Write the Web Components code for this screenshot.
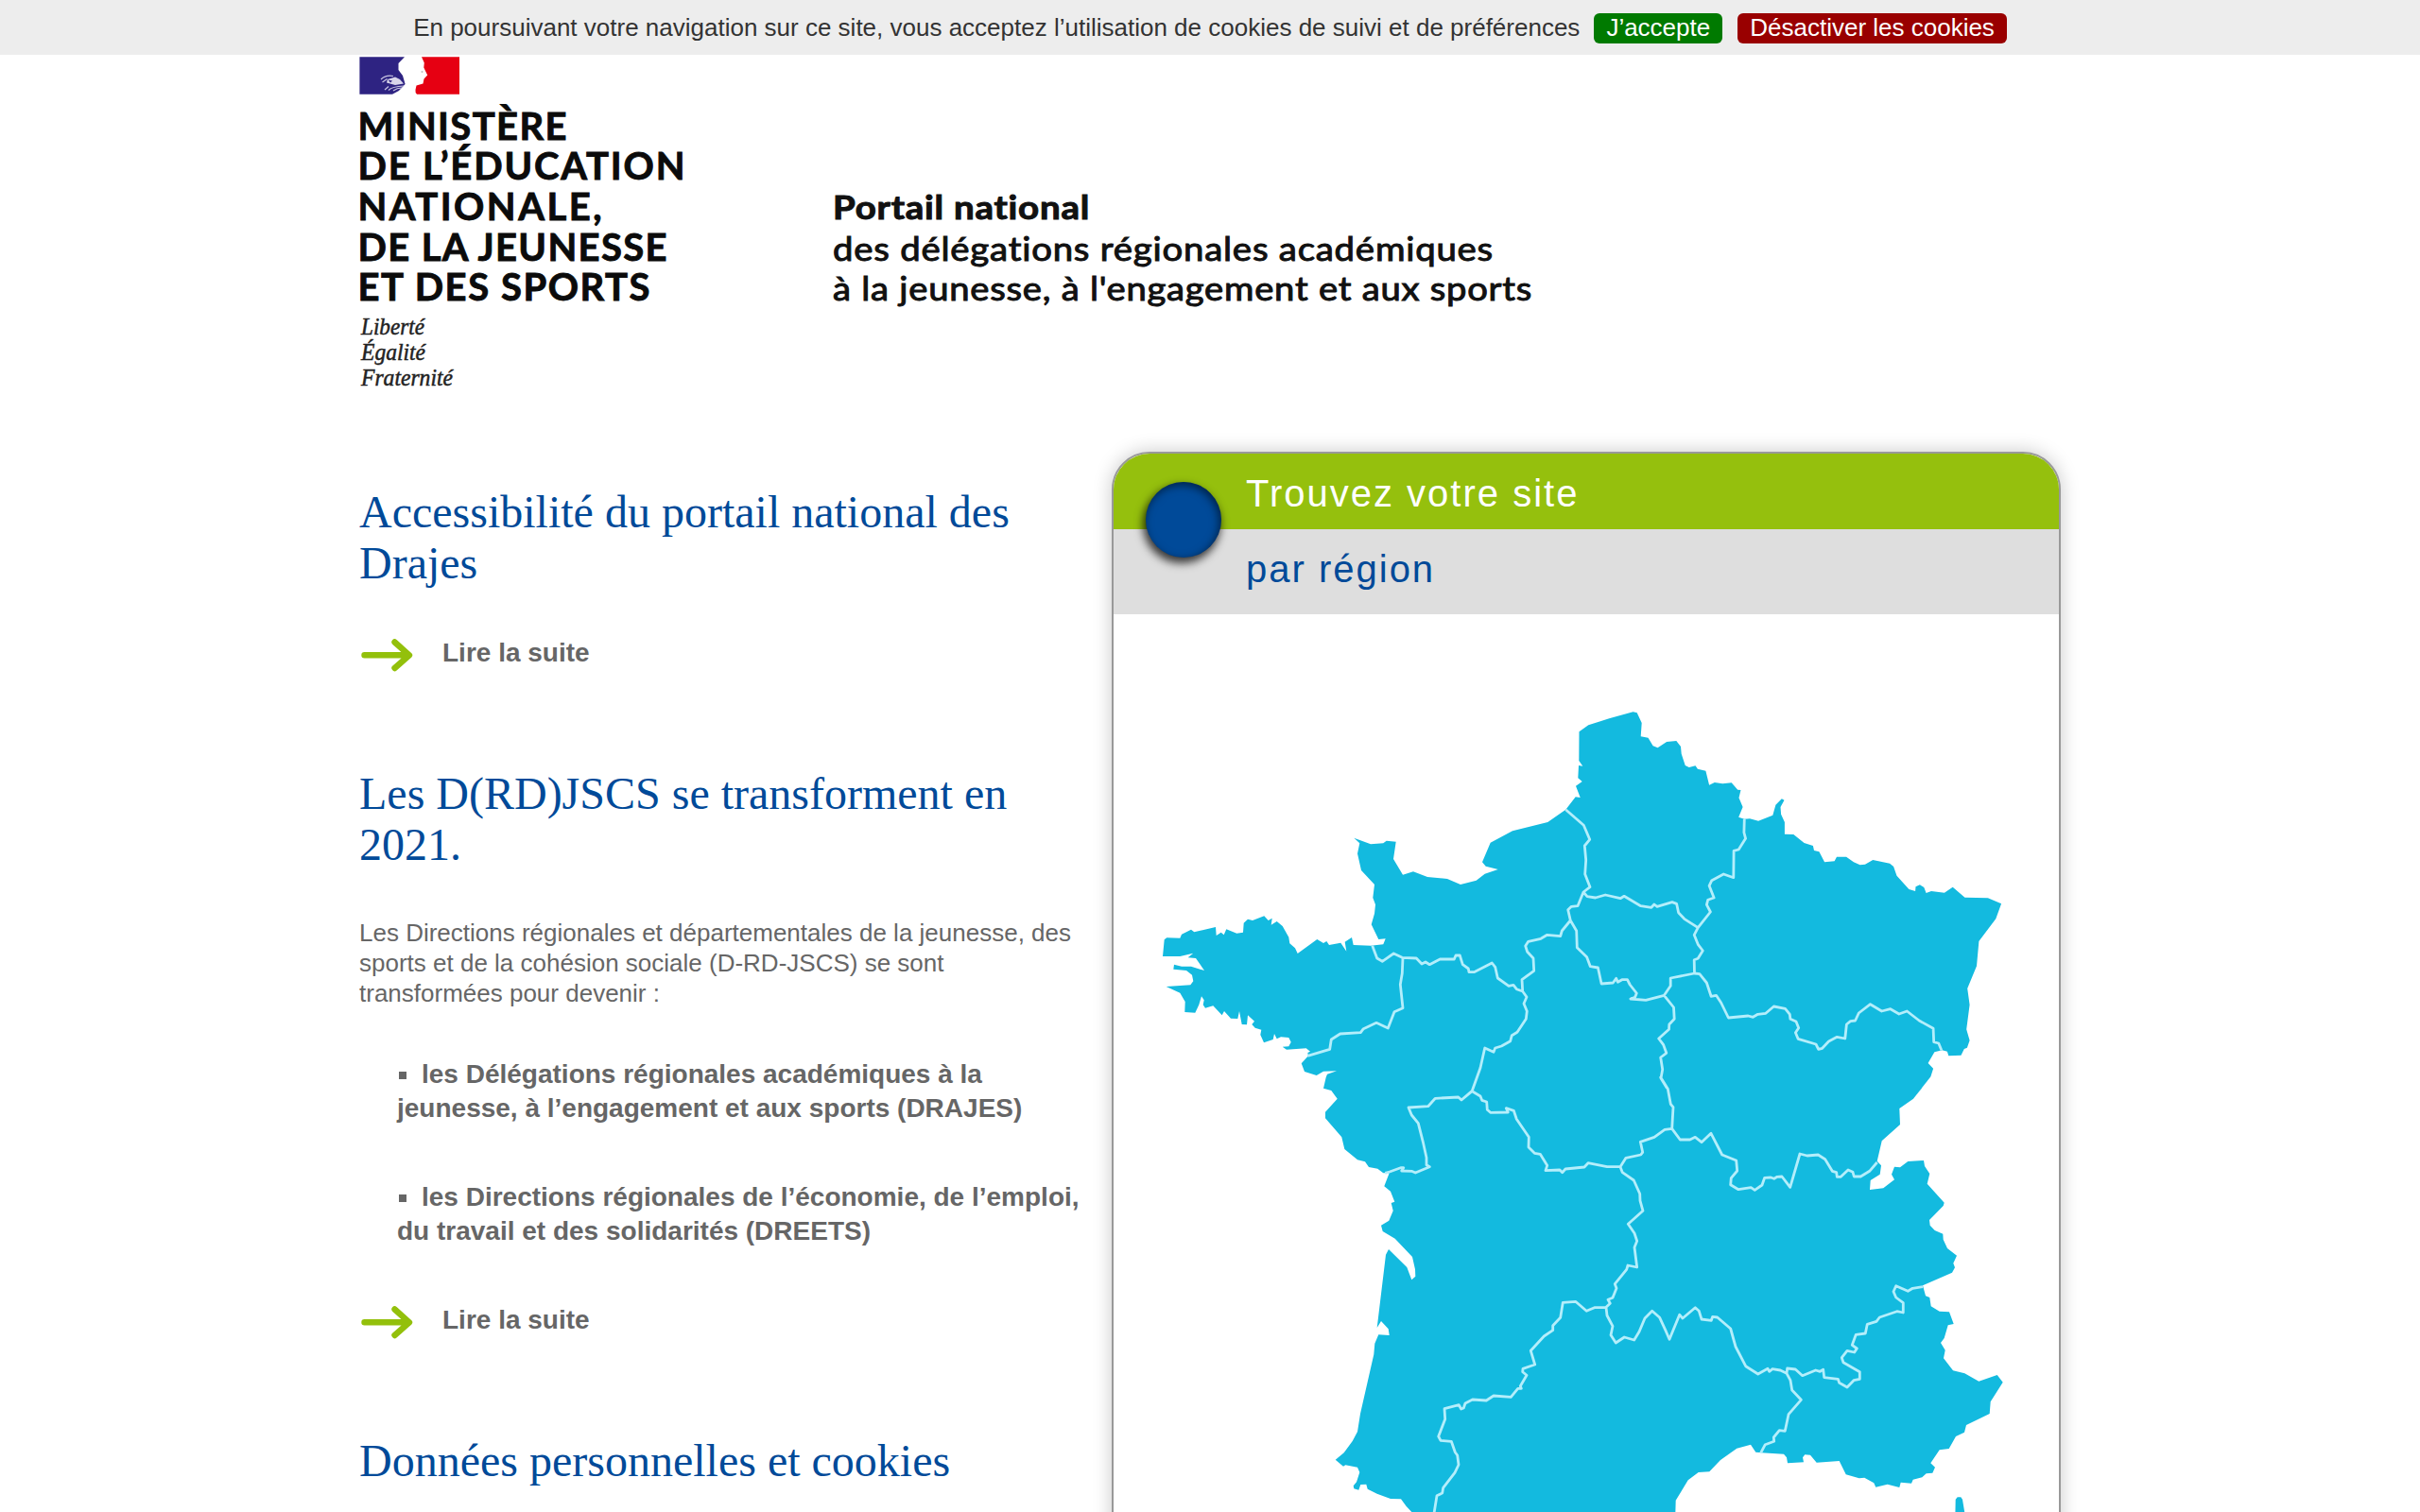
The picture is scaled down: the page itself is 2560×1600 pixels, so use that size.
<!DOCTYPE html>
<html lang="fr">
<head>
<meta charset="utf-8">
<title>Portail national des Drajes</title>
<style>
html,body{margin:0;padding:0;background:#fff}
body{height:1600px;overflow:hidden;font-family:"Liberation Sans",Arial,sans-serif;color:#666}
</style>
</head>
<body>
<portal-page>
  <cookie-bar slot="cookies">
    En poursuivant votre navigation sur ce site, vous acceptez l’utilisation de cookies de suivi et de préférences
    <cookie-button slot="actions">J’accepte</cookie-button>
    <cookie-button slot="actions" kind="deny">Désactiver les cookies</cookie-button>
  </cookie-bar>
  <site-header slot="header"></site-header>
  <news-article slot="news" heading="Accessibilité du portail national des Drajes"></news-article>
  <news-article slot="news" heading="Les D(RD)JSCS se transforment en 2021.">
    <news-text>Les Directions régionales et départementales de la jeunesse, des sports et de la cohésion sociale (D-RD-JSCS) se sont transformées pour devenir :</news-text>
    <news-bullet>les Délégations régionales académiques à la jeunesse, à l’engagement et aux sports (DRAJES)</news-bullet>
    <news-bullet>les Directions régionales de l’économie, de l’emploi, du travail et des solidarités (DREETS)</news-bullet>
  </news-article>
  <news-article slot="news" heading="Données personnelles et cookies" brief></news-article>
  <region-card slot="side">
    <span slot="title">Trouvez votre site</span>
    <span slot="subtitle">par région</span>
    <france-map></france-map>
  </region-card>
</portal-page>
<script>
const define = (name, html, setup) => customElements.define(name, class extends HTMLElement {
  constructor() {
    super();
    this.attachShadow({ mode: 'open' }).innerHTML = html;
  }
  connectedCallback() { if (setup) setup(this, this.shadowRoot); }
});

define('portal-page', `
<style>
:host{display:flex;flex-direction:column;height:1600px;overflow:hidden}
.wrap{width:1800px;margin:0 auto}
.cols{display:flex;justify-content:space-between}
.news{width:770px;padding-top:37px;display:flex;flex-direction:column;gap:105px}
</style>
<slot name="cookies"></slot>
<div class="wrap">
  <slot name="header"></slot>
  <div class="cols"><div class="news"><slot name="news"></slot></div><slot name="side"></slot></div>
</div>`);

define('cookie-bar', `
<style>
:host{display:flex;flex:none;justify-content:center;align-items:center;height:58px;background:#ededed;color:#333;font-size:26px;line-height:32px;white-space:nowrap}
.actions{display:flex;gap:16px;margin-left:15px}
</style>
<span><slot></slot></span><div class="actions"><slot name="actions"></slot></div>`);

define('cookie-button', `
<style>
:host{display:block;height:32px;line-height:31px;padding:0 13px;border-radius:6px;background:#007a00;color:#fff;cursor:pointer;margin-top:2px}
:host([kind=deny]){background:#990000}
</style><slot></slot>`);

define('site-header', `
<style>
:host{display:block;height:420px}
svg{display:block;overflow:visible}
.m{font:700 40px Lato,sans-serif;fill:#0b0b0b;stroke:#0b0b0b;stroke-width:.9}
.d{font:italic 25px "Liberation Serif",serif;fill:#222;stroke:#222;stroke-width:.5}
.p{font:400 35px Lato,sans-serif;letter-spacing:.7px;fill:#111;stroke:#111;stroke-width:1}
.p.b{font-weight:700}
.m,.p{font-variant-ligatures:none}
</style>
<svg width="1800" height="420" viewBox="380 58 1800 420">
  <path fill="#2e2382" d="M380.4 60.3H428L421.5 67V74L426 80L428.6 89L422 96L415 99.7H380.4Z"/>
  <path fill="#e60012" d="M446 60.3H486V99.7H441Q439 98 439.5 95L440.5 90.5L447.5 88.5L448.5 83.5L452.2 79.5L448.3 71.5L448.8 66.5Z"/>
  <path fill="#d8d5ea" d="M410 84L418 81.5L423 84L427 88.5L418 90L409 87.5Z"/>
  <path fill="#2e2382" d="M410.500 84.600L415 85.500L413 87.600Z"/>
  <path fill="none" stroke="#c9c5e2" stroke-width="1.200" d="M403 84Q408 79 416 80.500M404.500 87L409.500 83.500M407 95L411 91.500M411 95.500Q415 91.500 427 91M416 96Q420 93 425 93"/>
  <circle cx="446.500" cy="76" r="1" fill="#bbb"/>
  <g class="m">
    <text x="378.500" y="147.700" textLength="221">MINISTÈRE</text>
    <text x="378.500" y="190.400" textLength="346">DE L’ÉDUCATION</text>
    <text x="378.500" y="233" textLength="258">NATIONALE,</text>
    <text x="378.500" y="275.500" textLength="327">DE LA JEUNESSE</text>
    <text x="378.500" y="318" textLength="309">ET DES SPORTS</text>
  </g>
  <g class="d">
    <text x="382" y="354" textLength="67" lengthAdjust="spacingAndGlyphs">Liberté</text>
    <text x="382" y="381" textLength="68" lengthAdjust="spacingAndGlyphs">Égalité</text>
    <text x="382" y="407.500" textLength="97" lengthAdjust="spacingAndGlyphs">Fraternité</text>
  </g>
  <text class="p b" x="881" y="232" textLength="272" lengthAdjust="spacingAndGlyphs">Portail national</text>
  <text class="p" x="881" y="276" textLength="699" lengthAdjust="spacingAndGlyphs">des délégations régionales académiques</text>
  <text class="p" x="881" y="318" textLength="740" lengthAdjust="spacingAndGlyphs">à la jeunesse, à l'engagement et aux sports</text>
</svg>`);

define('news-article', `
<style>
:host{display:block}
h2{margin:0;width:740px;font:400 48px/54px "Liberation Serif",serif;color:#004a99}
.body{display:flex;flex-direction:column}
</style>
<h2></h2><div class="body"><slot></slot></div><read-more></read-more>`,
(el, root) => {
  root.querySelector('h2').textContent = el.getAttribute('heading');
  const more = root.querySelector('read-more');
  if (el.hasAttribute('brief')) more.remove();
  else more.style.marginTop = el.children.length ? '57px' : '49px';
});

define('news-text', `
<style>:host{display:block;margin-top:50px;width:760px;font-size:26px;line-height:32px;margin-bottom:-6px}</style><slot></slot>`);

define('news-bullet', `
<style>
:host{display:block;margin:58px 0 0 40px;font-weight:700;font-size:28px;line-height:36px}
i{display:inline-block;width:8px;height:8px;margin:0 16px 4px 2px;background:currentColor}
</style><i></i><slot></slot>`);

define('read-more', `
<style>
:host{display:flex;height:36px;font-weight:700;font-size:28px;line-height:38px}
svg{margin:2px 28px 0 0}
</style>
<svg width="60" height="38" viewBox="0 0 60 38"><path d="M5.500 19.300H52M37.500 5.500L53 19.300L37.500 33" fill="none" stroke="#93c00b" stroke-width="6.400" stroke-linecap="round" stroke-linejoin="round"/></svg>
<span>Lire la suite</span>`);

define('region-card', `
<style>
:host{display:block;box-sizing:border-box;width:1004px;height:1300px;border:2px solid #999;border-radius:40px;overflow:hidden;box-shadow:0 0 20px rgba(0,0,0,.22);background:#fff;position:relative}
.t,.s{box-sizing:border-box;padding-left:140px;font-size:40px;letter-spacing:2px}
.t{height:80px;line-height:84px;background:#95c00d;color:#fff}
.s{height:90px;line-height:84px;background:#dedede;color:#004a99}
.dot{position:absolute;left:34px;top:30px;width:80px;height:80px;border-radius:50%;background:#004a99;box-shadow:-2px 5px 10px 1px rgba(0,0,0,.75),inset -2px 3px 10px rgba(0,0,0,.55)}
</style>
<div class="t"><slot name="title"></slot></div>
<div class="s"><slot name="subtitle"></slot></div>
<div class="dot"></div>
<slot></slot>`);

/* Survey sheets of the map: origin and horizontal scale; points are in thirds of a pixel. */
const sheets = { nw:[1200,720,3], ne:[1660,720,2.958], sw:[1360,1140,3], se:[1740,1140,3] };
const trace = (...parts) => {
  const pts = [];
  for (let i = 0; i < parts.length; i += 2) {
    const [ox, oy, sx] = sheets[parts[i]];
    for (const p of parts[i + 1].trim().split(/\s+/)) {
      const [x, y] = p.split(',').map(Number);
      pts.push((ox + x / sx).toFixed(1) + ' ' + (oy + y / 3).toFixed(1));
    }
  }
  return 'M' + pts.join('L');
};
const coast = trace(
'ne','31,163 60,142 125,121 200,100 212,103 227,135 224,178 247,182 262,208 277,214 305,195 335,192 349,210 351,233 363,270 375,276 395,271 402,281 427,287 438,332 455,324 480,328 508,325 527,347 537,348 531,373 543,402 530,434 548,440 565,439 592,446 637,428 646,395 665,376 673,380 661,402 663,425 674,450 674,488 702,489 735,516 763,525 766,540 782,544 799,577 830,574 837,560 867,560 890,577 910,586 926,584 950,570 1003,581 1015,591 1025,620 1063,663 1083,669 1084,655 1097,649 1110,657 1117,675 1133,669 1174,674 1200,656 1238,689 1310,691 1352,709 1335,757 1282,828 1275,907 1246,978 1253,1030 1243,1108 1253,1143 1245,1166 1236,1170 1226,1190 1187,1192 1183,1178 1167,1174 1143,1180 1123,1215 1139,1232 1131,1258 1085,1320',
'se','905,0 852,68 808,99 810,150 752,202 737,266 750,280 746,308 716,327 714,357 757,352 792,325 783,308 792,284 810,286 835,267 885,264 888,282 904,306 896,338 950,398 947,408 903,453 905,470 920,486 946,497 947,515 960,543 990,566 979,590 984,604 975,620 882,661 891,694 904,699 908,727 935,743 966,745 980,783 962,787 950,828 939,843 953,866 948,892 978,931 1015,940 1060,965 1118,945 1136,968 1097,1030 1094,1068 1020,1104 1014,1127 987,1140 965,1179 935,1183 907,1225 921,1238 913,1256 893,1258 880,1270 851,1277 846,1289 812,1286 808,1302 770,1292 733,1301 727,1288 697,1271 680,1273 638,1261 617,1218 545,1223 525,1199 508,1198 501,1207 504,1222 453,1225 450,1207 441,1196 370,1192 352,1190 336,1166 292,1178 240,1215 205,1252 170,1254 137,1279 98,1343 96,1420',
'sw','440,1420 400,1380 383,1362 366,1339 333,1338 290,1322 260,1307 256,1292 238,1293 232,1310 217,1306 215,1297 225,1285 235,1254 228,1238 190,1231 183,1235 158,1214 185,1192 212,1155 228,1125 237,1068 280,880 283,845 295,817 329,819 326,799 303,774 290,795 318,563 327,546 385,603 400,643 412,632 411,610 402,570 347,512 308,489 303,470 328,455 341,424 335,399 346,395 333,362 313,346 329,304 310,304 292,290 264,285 252,268 228,262 187,228 178,190 126,130 126,110 164,68 145,42 120,35',
'nw','608,1260 612,1250 642,1240 600,1241 578,1254 540,1242 530,1216 552,1192 550,1182 558,1178 545,1168 483,1172 470,1163 490,1162 497,1148 490,1134 465,1132 452,1138 444,1122 440,1140 411,1150 400,1125 403,1109 383,1103 373,1092 381,1082 360,1063 357,1093 341,1092 333,1050 328,1074 306,1073 285,1050 278,1063 250,1033 225,1040 218,1030 221,1015 213,1003 205,1030 193,1055 160,1053 161,1020 145,992 101,972 178,967 187,955 183,935 165,921 124,917 126,902 150,908 180,908 222,921 195,882 170,880 187,866 145,876 90,876 95,823 103,817 145,818 150,806 180,791 190,799 258,783 260,810 275,800 284,808 292,790 325,803 345,800 347,770 360,758 375,762 412,748 425,762 437,755 434,776 452,765 470,780 490,815 493,835 510,850 518,867 580,822 600,834 610,828 618,840 655,833 673,860 668,830 690,816 695,840 750,842 790,838 797,820 775,822 752,775 762,740 765,712 757,690 762,648 720,603 708,550 715,517 697,500 750,520 790,517 800,509 830,512 822,567 852,617 885,607 930,624 993,630 1035,648 1085,635 1112,614 1154,600 1115,590 1104,577 1130,515 1200,478 1312,450 1369,410 1400,370 1415,372 1401,335 1421,321 1408,310 1410,270 1423,272 1411,255') + 'Z'
+ trace('se','985,1400 986,1340 992,1333 1003,1333 1008,1340 1018,1400') + 'Z';
const borders = [
trace('nw','1369,410 1426,460 1445,505 1429,525 1433,570 1430,615 1446,656 1425,672 1437,686','ne','82,690 113,681 160,692 172,685 224,716 257,721 266,711 275,718 322,704 336,709 342,737 360,757 403,785'),
trace('nw','1425,672 1407,716 1387,718 1376,728 1384,762 1357,795 1352,812 1310,808 1290,820 1250,829 1241,843 1247,862 1266,882 1268,922 1230,950 1232,987'),
trace('nw','1384,762 1403,795 1405,848','ne','55,878 66,908 90,912 101,963 137,960 147,946 152,958 165,950 182,950 190,966 211,993 206,1006 192,1011 240,1015 297,1000'),
trace('nw','755,842 770,882 787,892 823,867 850,880 895,882 912,900 924,894 937,902 970,885 1015,885 1020,873 1033,873 1042,902 1060,915 1062,926 1078,926 1135,897 1145,910 1153,945 1188,970 1203,967 1213,980 1232,987 1245,1005 1236,1026 1246,1050 1243,1075 1215,1117 1198,1127 1193,1145 1165,1161 1145,1167 1140,1180 1112,1167 1098,1230 1072,1303','sw','558,72 548,63 475,67 452,92 390,96 400,120 421,146 436,205 447,255 447,278 457,284 412,303 400,298 368,297 374,287 365,287 330,300 316,304'),
trace('nw','852,880 850,930 844,965 852,1040 825,1052 805,1104 768,1087 727,1106 718,1118 653,1122 625,1140 620,1171 550,1192'),
trace('ne','548,440 547,483 552,502 530,537 515,541 514,626 483,615 446,635 438,652 453,690 434,697 430,712 442,735 403,785 391,808 403,838 418,858 403,883 391,887 392,930'),
trace('ne','297,1000 317,970 317,945 392,930 408,932 430,960 444,1003 460,1000 475,1023 498,1071 560,1065 575,1069 590,1060 615,1057 640,1035 676,1042 690,1060 692,1075 710,1083 718,1103 708,1118 716,1138 772,1155 780,1171 792,1168 812,1146 838,1132 863,1137 868,1092 880,1082 895,1080 906,1056 942,1028 978,1050 1005,1043 1032,1059 1057,1050 1095,1080 1139,1105 1141,1148 1156,1152 1165,1174'),
trace('ne','297,1000 327,1038 329,1075 313,1092 312,1108 280,1137 295,1157 304,1183 286,1197 292,1235 287,1263 305,1293','sw','1190,0 1213,37 1222,85 1230,95 1226,163'),
trace('sw','592,44 618,60 623,73 638,78 640,103 650,112 706,111 700,98 724,106 733,133 772,190 771,222 790,241 808,244 830,280 825,296 870,294 878,302 888,291 948,285 960,272 1020,284 1062,284 1080,256 1127,246 1133,238 1126,205 1170,190 1203,166 1226,163','se','112,198 143,198 160,190 180,206 210,178 245,246 290,264 293,297 274,320 272,341 297,356 337,350 349,358 372,342 380,319 400,318 410,322 420,316 435,315 461,349 492,243 515,249 550,246 572,260 595,298 608,302 610,316 622,316 645,294 660,301 664,315 685,315 713,298 737,270'),
trace('sw','1062,284 1069,302 1105,327 1124,370 1125,392 1134,424 1087,466 1107,495 1115,520 1107,540 1115,603 1086,597 1082,610 1045,656 1050,670 1038,700 1023,706 1030,718 1017,730 1020,756 1038,790 1032,818 1048,843 1075,825 1106,834 1122,808 1140,765 1163,742 1187,763 1207,806 1218,832','se','110,754 120,765 160,731 172,742 180,768 211,772 215,760 230,762 272,798 288,855 320,917 359,942 390,925 395,934 405,926 430,930 450,940 462,962 467,993 496,1024 456,1070 445,1123 427,1121 409,1143 410,1156 382,1166 368,1192'),
trace('se','450,940 452,924 478,927 500,947 542,930 556,934 566,928 569,953 613,958 617,970 642,984 663,962 682,958 682,935 630,905 625,890 642,868 665,873 673,861 658,850 670,817 700,813 706,784 735,775 745,762 800,743 820,747 820,716 797,699 789,680 797,662 835,679 850,670 882,665'),
trace('sw','592,44 558,72'),
trace('sw','1017,730 980,731 955,742 920,712 880,715 872,763 848,788 848,803 820,822 778,868 791,912 753,925 752,935 765,946 745,980 748,988 737,988 715,1015 660,1011 637,1026 593,1023 570,1035 565,1050 557,1053 550,1040 504,1052 506,1085 485,1140 492,1153 526,1156 538,1190 545,1200 549,1230 537,1255 500,1303 497,1320 480,1328 470,1390')
].join('');

define('france-map', `
<style>:host,svg{display:block}</style>
<svg width="1000" height="950" viewBox="1178 650 1000 950" stroke-linejoin="round">
  <path fill="#13badf" d="${coast}"/>
  <path fill="none" stroke="#b4eefb" stroke-width="2.800" d="${borders}"/>
</svg>`);
</script>
</body>
</html>
